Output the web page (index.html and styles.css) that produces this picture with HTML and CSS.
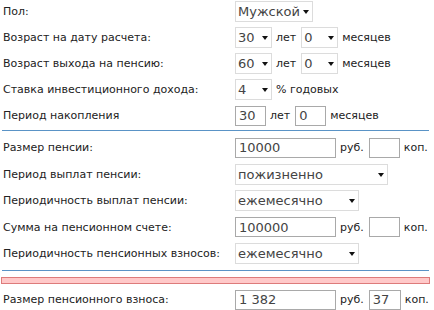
FILE: index.html
```html
<!DOCTYPE html>
<html lang="ru">
<head>
    <meta charset="UTF-8">
    <title>Пенсионный калькулятор</title>
    <link rel="stylesheet" href="styles.css">
</head>
<body>
    <div class="calc">
        <div class="section first">
            <div class="row">
                <label class="label">Пол:</label>
                <div class="field">
                    <span class="sel w78"><select><option>Мужской</option><option>Женский</option></select></span>
                </div>
            </div>
            <div class="row">
                <label class="label">Возраст на дату расчета:</label>
                <div class="field">
                    <span class="sel w37"><select><option>30</option></select></span>
                    <span class="unit">лет</span>
                    <span class="sel w37"><select><option>0</option></select></span>
                    <span class="unit">месяцев</span>
                </div>
            </div>
            <div class="row">
                <label class="label">Возраст выхода на пенсию:</label>
                <div class="field">
                    <span class="sel w37"><select><option>60</option></select></span>
                    <span class="unit">лет</span>
                    <span class="sel w37"><select><option>0</option></select></span>
                    <span class="unit">месяцев</span>
                </div>
            </div>
            <div class="row">
                <label class="label">Ставка инвестиционного дохода:</label>
                <div class="field">
                    <span class="sel w37"><select><option>4</option></select></span>
                    <span class="unit">% годовых</span>
                </div>
            </div>
            <div class="row">
                <label class="label">Период накопления</label>
                <div class="field">
                    <input class="inp w31" type="text" value="30">
                    <span class="unit">лет</span>
                    <input class="inp w31" type="text" value="0">
                    <span class="unit">месяцев</span>
                </div>
            </div>
        </div>

        <div class="divider first-line"></div>

        <div class="section">
            <div class="row">
                <label class="label">Размер пенсии:</label>
                <div class="field">
                    <input class="inp w101" type="text" value="10000">
                    <span class="unit">руб.</span>
                    <input class="inp w31" type="text" value="">
                    <span class="unit">коп.</span>
                </div>
            </div>
            <div class="row">
                <label class="label">Период выплат пенсии:</label>
                <div class="field">
                    <span class="sel w153"><select><option>пожизненно</option></select></span>
                </div>
            </div>
            <div class="row">
                <label class="label">Периодичность выплат пенсии:</label>
                <div class="field">
                    <span class="sel w124"><select><option>ежемесячно</option></select></span>
                </div>
            </div>
            <div class="row">
                <label class="label">Сумма на пенсионном счете:</label>
                <div class="field">
                    <input class="inp w101" type="text" value="100000">
                    <span class="unit">руб.</span>
                    <input class="inp w31" type="text" value="">
                    <span class="unit">коп.</span>
                </div>
            </div>
            <div class="row">
                <label class="label">Периодичность пенсионных взносов:</label>
                <div class="field">
                    <span class="sel w124"><select><option>ежемесячно</option></select></span>
                </div>
            </div>
        </div>

        <div class="divider"></div>
        <div class="progress"></div>

        <div class="section result">
            <div class="row">
                <label class="label">Размер пенсионного взноса:</label>
                <div class="field">
                    <input class="inp w101" type="text" value="1 382">
                    <span class="unit">руб.</span>
                    <input class="inp w32" type="text" value="37">
                    <span class="unit">коп.</span>
                </div>
            </div>
        </div>
    </div>
</body>
</html>
```

FILE: styles.css
```css
* {
    margin: 0;
    padding: 0;
    box-sizing: border-box;
}
body {
    font-family: 'DejaVu Sans', Verdana, sans-serif;
    font-size: 11px;
    color: #222;
    background-color: white;
}
.calc {
    padding-top: 1px;
}
.section {
    display: flex;
    flex-direction: column;
    gap: 5.5px;
    padding: 0 0 0 3px;
}
.section.first {
    gap: 5px;
}
.row {
    display: flex;
    align-items: center;
    height: 21px;
}
.label {
    width: 232px;
    flex-shrink: 0;
}
.field {
    display: flex;
    align-items: center;
    gap: 4px;
}
.unit {
    margin: 0 1px 0 0;
}

/* Selects */
.sel {
    position: relative;
    display: inline-block;
    height: 21px;
}
.sel select {
    appearance: none;
    -webkit-appearance: none;
    width: 100%;
    height: 100%;
    border: 1px solid #dcdcdc;
    background-color: white;
    color: #444;
    font-family: 'DejaVu Sans', Verdana, sans-serif;
    font-size: 13px;
    padding: 0 0 0 2px;
    border-radius: 0;
    outline: none;
}
.sel::after {
    content: "";
    position: absolute;
    right: 4px;
    top: 9px;
    border-left: 3.5px solid transparent;
    border-right: 3.5px solid transparent;
    border-top: 4px solid #111;
    pointer-events: none;
}
.w37 { width: 37px; }
.w78 { width: 78px; }
.w124 { width: 124px; }
.w153 { width: 153px; }

/* Text inputs */
.inp {
    height: 20px;
    border: 1px solid #a9a9a9;
    color: #444;
    font-family: 'DejaVu Sans', Verdana, sans-serif;
    font-size: 13px;
    padding: 0 3px;
    outline: none;
}
.w31 { width: 31px; }
.w32 { width: 32px; }
.w101 { width: 101px; }

/* Separators */
.divider {
    height: 1px;
    background-color: #5a93c6;
    margin: 6px 5px 6px 2px;
}
.divider.first-line {
    margin-top: 4px;
}
.progress {
    height: 7px;
    margin: 0 4px 5px 1px;
    border: 1px solid #dd7b7b;
    background-color: #ffc9c9;
}
```
